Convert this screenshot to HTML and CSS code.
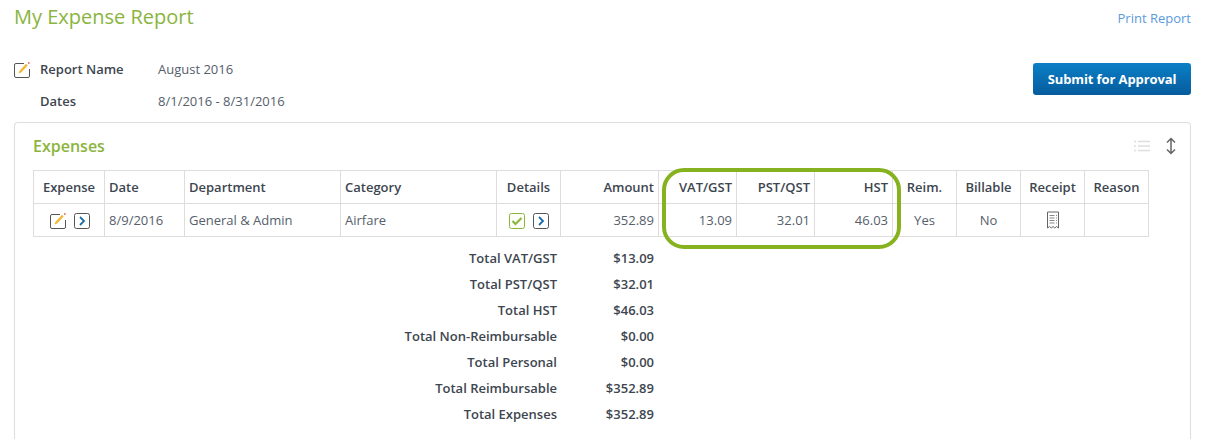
FILE: index.html
```html
<!DOCTYPE html>
<html lang="en">
<head>
    <meta charset="UTF-8">
    <title>My Expense Report</title>
    <link rel="stylesheet" href="styles.css">
</head>
<body>
    <div class="page">
        <div class="title-row">
            <h1>My Expense Report</h1>
            <a class="print-link" href="#">Print Report</a>
        </div>

        <div class="report-head">
            <div class="report-info">
                <div class="info-row">
                    <svg class="edit-icon big" viewBox="0 0 16 16">
                        <path d="M10 1.500H2a1.500 1.500 0 0 0-1.500 1.500v11A1.500 1.500 0 0 0 2 15.500h12a1.500 1.500 0 0 0 1.500-1.500V7" fill="none" stroke="#555" stroke-width="1"/>
                        <path d="M4.500 11.500l1-2.700 6.500-7 1.700 1.700-6.500 7z" fill="#f0b93a"/>
                        <circle cx="14.800" cy="1" r="1" fill="#e57373"/>
                    </svg>
                    <span class="info-label">Report Name</span>
                    <span class="info-value">August 2016</span>
                </div>
                <div class="info-row">
                    <span class="info-label">Dates</span>
                    <span class="info-value">8/1/2016 - 8/31/2016</span>
                </div>
            </div>
            <button class="submit-btn">Submit for Approval</button>
        </div>

        <div class="card">
            <div class="card-head">
                <h2>Expenses</h2>
                <div class="card-tools">
                    <svg class="list-icon" viewBox="0 0 16 12">
                        <path d="M0 1.500h2M4 1.500h12M0 6h2M4 6h12M0 10.500h2M4 10.500h12" stroke="#dedede" stroke-width="1.500"/>
                    </svg>
                    <svg class="resize-icon" viewBox="0 0 12 18">
                        <path d="M6 1.500v15M2 5.500l4-4 4 4M2 12.500l4 4 4-4" fill="none" stroke="#666" stroke-width="1.500"/>
                    </svg>
                </div>
            </div>

            <div class="table-wrap">
                <table class="expense-table">
                    <colgroup>
                        <col class="w-71"><col class="w-80"><col class="w-156"><col class="w-156"><col class="w-64">
                        <col class="w-98"><col class="w-78"><col class="w-78"><col class="w-78">
                        <col class="w-64"><col class="w-64"><col class="w-64"><col class="w-64">
                    </colgroup>
                    <thead>
                        <tr>
                            <th class="center">Expense</th>
                            <th>Date</th>
                            <th>Department</th>
                            <th>Category</th>
                            <th class="center">Details</th>
                            <th class="right">Amount</th>
                            <th class="right">VAT/GST</th>
                            <th class="right">PST/QST</th>
                            <th class="right">HST</th>
                            <th class="center">Reim.</th>
                            <th class="center">Billable</th>
                            <th class="center">Receipt</th>
                            <th class="center">Reason</th>
                        </tr>
                    </thead>
                    <tbody>
                        <tr>
                            <td class="center nudge">
                                <span class="cell-icons">
                                    <svg class="edit-icon" viewBox="0 0 16 16">
                                        <path d="M10 1.500H2a1.500 1.500 0 0 0-1.500 1.500v11A1.500 1.500 0 0 0 2 15.500h12a1.500 1.500 0 0 0 1.500-1.500V7" fill="none" stroke="#555" stroke-width="1"/>
                                        <path d="M4.500 11.500l1-2.700 6.500-7 1.700 1.700-6.500 7z" fill="#f0b93a"/>
                                        <circle cx="14.800" cy="1" r="1" fill="#e57373"/>
                                    </svg>
                                    <svg class="box-icon" viewBox="0 0 16 16">
                                        <rect x="0.500" y="0.500" width="15" height="15" rx="2" fill="none" stroke="#555"/>
                                        <path d="M6 4l4 4-4 4" fill="none" stroke="#1b6ca8" stroke-width="1.800"/>
                                    </svg>
                                </span>
                            </td>
                            <td>8/9/2016</td>
                            <td>General &amp; Admin</td>
                            <td>Airfare</td>
                            <td class="center">
                                <span class="cell-icons">
                                    <svg class="box-icon" viewBox="0 0 16 16">
                                        <rect x="0.500" y="0.500" width="15" height="15" rx="2" fill="#fbfdf6" stroke="#8ab43e"/>
                                        <path d="M3.500 8l3 3 6-6" fill="none" stroke="#8ab43e" stroke-width="2"/>
                                    </svg>
                                    <svg class="box-icon" viewBox="0 0 16 16">
                                        <rect x="0.500" y="0.500" width="15" height="15" rx="2" fill="none" stroke="#555"/>
                                        <path d="M6 4l4 4-4 4" fill="none" stroke="#1b6ca8" stroke-width="1.800"/>
                                    </svg>
                                </span>
                            </td>
                            <td class="right">352.89</td>
                            <td class="right">13.09</td>
                            <td class="right">32.01</td>
                            <td class="right">46.03</td>
                            <td class="center">Yes</td>
                            <td class="center">No</td>
                            <td class="center">
                                <svg class="receipt-icon" viewBox="0 0 12 18">
                                    <path d="M0.500 0.500h11v16l-2-1.500-1.700 1.500-1.800-1.500-1.800 1.500-1.700-1.500-2 1.500z" fill="none" stroke="#666"/>
                                    <path d="M2.500 4h5M9 4h1M2.500 6.500h5M9 6.500h1M2.500 9h5M9 9h1M2.500 11.500h5M9 11.500h1" stroke="#888"/>
                                </svg>
                            </td>
                            <td></td>
                        </tr>
                    </tbody>
                </table>
                <div class="highlight"></div>
            </div>

            <div class="totals">
                <span>Total VAT/GST</span><span>$13.09</span>
                <span>Total PST/QST</span><span>$32.01</span>
                <span>Total HST</span><span>$46.03</span>
                <span>Total Non-Reimbursable</span><span>$0.00</span>
                <span>Total Personal</span><span>$0.00</span>
                <span>Total Reimbursable</span><span>$352.89</span>
                <span>Total Expenses</span><span>$352.89</span>
            </div>
        </div>
    </div>
</body>
</html>
```

FILE: styles.css
```css
body {
    margin: 0;
    font-family: "Open Sans", sans-serif;
    font-size: 13px;
    color: #555e6b;
    background: #fff;
}

.page {
    display: flex;
    flex-direction: column;
    box-sizing: border-box;
    height: 100vh;
    padding: 0 21px 0 14px;
}

.title-row {
    display: flex;
    justify-content: space-between;
    align-items: flex-start;
    height: 34px;
}

h1 {
    margin: 0;
    font-size: 20px;
    line-height: 34px;
    font-weight: 400;
    color: #8ab43e;
}

.print-link {
    color: #5a9bdc;
    text-decoration: none;
    font-size: 13px;
    line-height: 36px;
}

.report-head {
    display: flex;
    justify-content: space-between;
    align-items: flex-start;
    flex: none;
    box-sizing: border-box;
    padding-top: 19px;
    height: 88px;
}

.info-row {
    display: flex;
    align-items: center;
    height: 32px;
    padding-left: 26px;
    position: relative;
}

.info-label {
    width: 118px;
    font-weight: 600;
    color: #3d4650;
}

.edit-icon {
    width: 16px;
    height: 16px;
}

.edit-icon.big {
    position: absolute;
    left: 0;
    top: 9px;
}

.submit-btn {
    width: 158px;
    height: 32px;
    margin-top: 10px;
    border: 0;
    border-radius: 3px;
    background: linear-gradient(#0b7fc7, #065c9c);
    color: #fff;
    font-family: inherit;
    font-size: 13px;
    font-weight: 700;
    letter-spacing: -0.1px;
}

.card {
    flex: 1;
    padding: 0 19px 0 18px;
    border: 1px solid #ddd;
    border-bottom: 0;
    border-radius: 4px 4px 0 0;
}

.card-head {
    display: flex;
    justify-content: space-between;
    align-items: center;
    box-sizing: border-box;
    height: 47px;
    padding-bottom: 2px;
}

h2 {
    margin: 0;
    font-size: 16px;
    font-weight: 600;
    color: #8ab43e;
}

.card-tools {
    display: flex;
    align-items: center;
    gap: 15px;
    margin-right: -6px;
}

.list-icon {
    width: 16px;
    height: 12px;
}

.resize-icon {
    width: 12px;
    height: 18px;
}

.table-wrap {
    position: relative;
}

.expense-table {
    table-layout: fixed;
    width: 1116px;
    border-collapse: collapse;
}

.expense-table th,
.expense-table td {
    height: 32px;
    padding: 0 4px;
    border: 1px solid #ddd;
    white-space: nowrap;
}

.expense-table th {
    font-weight: 600;
    text-align: left;
    color: #3d4650;
}

.expense-table th.center, .expense-table td.center { text-align: center; }
.expense-table th.right, .expense-table td.right { text-align: right; }
.expense-table td.nudge { padding-left: 6px; }

.w-64 { width: 64px; }
.w-71 { width: 71px; }
.w-78 { width: 78px; }
.w-80 { width: 80px; }
.w-98 { width: 98px; }
.w-156 { width: 156px; }

.cell-icons {
    display: inline-flex;
    align-items: center;
    gap: 8px;
    vertical-align: middle;
}

.box-icon {
    width: 16px;
    height: 16px;
}

.receipt-icon {
    width: 12px;
    height: 19px;
    vertical-align: middle;
}

.highlight {
    position: absolute;
    left: 629px;
    top: -2px;
    width: 231px;
    height: 73px;
    border: 4px solid #86b21f;
    border-radius: 22px;
}

.totals {
    display: grid;
    grid-template-columns: 524px 97px;
    grid-auto-rows: 26px;
    align-items: center;
    padding-top: 8px;
    font-weight: 600;
    color: #3d4650;
    text-align: right;
}
```
